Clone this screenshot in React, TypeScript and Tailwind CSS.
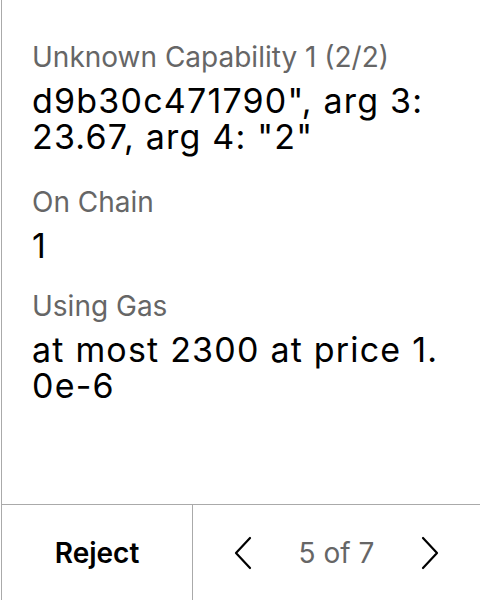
const Chevron = ({ dir }: { dir: 'left' | 'right' }) => (
  <svg width="20" height="34" viewBox="0 0 20 34" fill="none" stroke="#000" strokeWidth="2.2" strokeLinecap="round" strokeLinejoin="round">
    {dir === 'left' ? <polyline points="17,2 3,17 17,32" /> : <polyline points="3,2 17,17 3,32" />}
  </svg>
);

const Field = ({ label, lines, className }: { label: string; lines: string[]; className?: string }) => (
  <div className={className}>
    <div className="text-[28px] leading-[32px] text-[#666666]">{label}</div>
    <div className="mt-[10px] text-[34px] leading-[36px] tracking-[1.2px] text-black">
      {lines.map((l, i) => (
        <div key={i}>{l}</div>
      ))}
    </div>
  </div>
);

export default function App() {
  return (
    <div className="w-[480px] h-[600px] bg-white pl-px" style={{ fontFamily: 'Inter, "Noto Sans", sans-serif' }}>
      <div className="h-full flex flex-col border-l border-[#aaaaaa]">
        <div className="flex-1 pl-[30px] pt-[41px]">
          <Field label="Unknown Capability 1 (2/2)" lines={['d9b30c471790", arg 3:', '23.67, arg 4: "2"']} />
          <Field className="mt-[31px]" label="On Chain" lines={['1']} />
          <Field className="mt-[26px]" label="Using Gas" lines={['at most 2300 at price 1.', '0e-6']} />
        </div>
        <div className="h-[96px] flex border-t border-[#aaaaaa]">
          <div className="w-[191px] border-r border-[#aaaaaa] flex items-center justify-center">
            <span className="text-[28px] font-semibold text-black">Reject</span>
          </div>
          <div className="flex-1 flex items-center justify-between px-[40px]">
            <Chevron dir="left" />
            <span className="text-[28px] text-[#666666]">5 of 7</span>
            <Chevron dir="right" />
          </div>
        </div>
      </div>
    </div>
  );
}
